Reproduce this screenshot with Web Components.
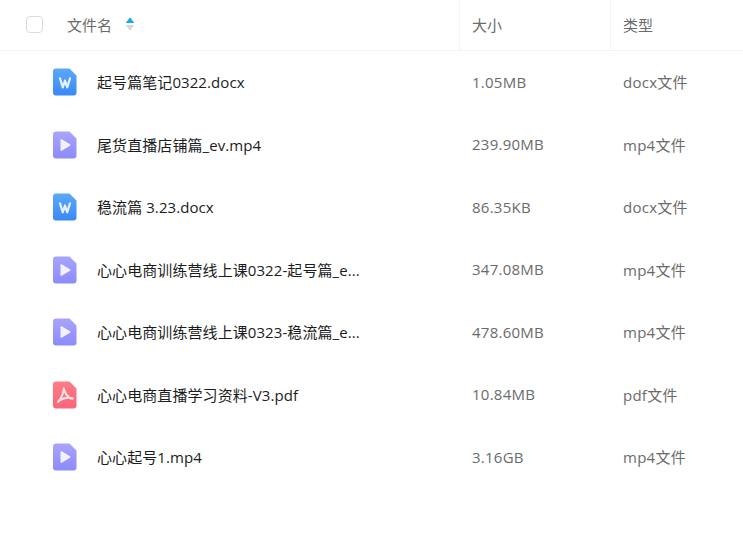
<!DOCTYPE html>
<html lang="zh">
<head>
<meta charset="utf-8">
<title>文件列表</title>
<style>
  html, body { margin: 0; background: #fff; }
  body { font-family: "Open Sans", "Noto Sans CJK SC", sans-serif; }
</style>
</head>
<body>
<file-table>
  <file-row kind="word" name="起号篇笔记0322.docx" size="1.05MB" type="docx文件"></file-row>
  <file-row kind="video" name="尾货直播店铺篇_ev.mp4" size="239.90MB" type="mp4文件"></file-row>
  <file-row kind="word" name="稳流篇 3.23.docx" size="86.35KB" type="docx文件"></file-row>
  <file-row kind="video" name="心心电商训练营线上课0322-起号篇_e..." size="347.08MB" type="mp4文件"></file-row>
  <file-row kind="video" name="心心电商训练营线上课0323-稳流篇_e..." size="478.60MB" type="mp4文件"></file-row>
  <file-row kind="pdf" name="心心电商直播学习资料-V3.pdf" size="10.84MB" type="pdf文件"></file-row>
  <file-row kind="video" name="心心起号1.mp4" size="3.16GB" type="mp4文件"></file-row>
</file-table>
<script>
const SHEET = 'M3 .5h13.500L23.500 7.500V24.500a3 3 0 0 1-3 3H3a3 3 0 0 1-3-3V3.500a3 3 0 0 1 3-3z';
const ICONS = {
  word: `<svg width="24" height="28" viewBox="0 0 24 28">
      <defs><linearGradient id="g" x1="0" y1="0" x2="0" y2="1"><stop offset="0" stop-color="#5aa9f8"/><stop offset="1" stop-color="#3a88f5"/></linearGradient></defs>
      <path d="${SHEET}" fill="url(#g)"/>
      <path d="M7 10.300l2.800 9 2.200-6.800 2.200 6.800 2.800-9" fill="none" stroke="#e6f1ff" stroke-width="2.200" stroke-linejoin="round" stroke-linecap="round"/>
    </svg>`,
  video: `<svg width="24" height="28" viewBox="0 0 24 28">
      <defs><linearGradient id="g" x1="0" y1="0" x2="0" y2="1"><stop offset="0" stop-color="#a9a4fb"/><stop offset="1" stop-color="#8b8bfb"/></linearGradient></defs>
      <path d="${SHEET}" fill="url(#g)"/>
      <path d="M7.500 9a.8.800 0 0 1 1.200-.7l8.300 5a.8.800 0 0 1 0 1.400l-8.300 5a.8.800 0 0 1-1.200-.7z" fill="#f3f1ff"/>
    </svg>`,
  pdf: `<svg width="24" height="28" viewBox="0 0 24 28">
      <defs><linearGradient id="g" x1="0" y1="0" x2="0" y2="1"><stop offset="0" stop-color="#fb7c88"/><stop offset="1" stop-color="#fb6577"/></linearGradient></defs>
      <path d="${SHEET}" fill="url(#g)"/>
      <path d="M10.800 7.500c-.3 4.500-2.300 9.500-5.800 13.500M10.800 7.500c.7 4.500 4 9.500 8.700 10.300M6.500 19.500c3.500-2.500 8-3.300 13-2.200" fill="none" stroke="#fde4e6" stroke-width="2" stroke-linecap="round"/>
    </svg>`
};

class FileTable extends HTMLElement {
  connectedCallback() {
    this.attachShadow({ mode: 'open' });
    this.shadowRoot.innerHTML = `
      <style>
        :host {
          display: block;
          color: #6b6b6b;
          font-size: 15px;
        }
        .head {
          display: grid;
          grid-template-columns: 459px 151px 1fr;
          height: 50px;
          border-bottom: 1px solid #f3f3f3;
        }
        .cell {
          display: flex;
          align-items: center;
          padding-left: 12px;
          border-left: 1px solid #f3f3f3;
          padding-bottom: 2px;
        }
        .cell.first {
          border-left: 0;
          padding-left: 26px;
        }
        .check {
          width: 15px;
          height: 15px;
          border: 1px solid #dcdcdc;
          border-radius: 4px;
          margin-right: 24px;
        }
        .sort {
          display: block;
          margin-left: 14px;
        }
      </style>
      <div class="head">
        <div class="cell first">
          <span class="check"></span>
          <span>文件名</span>
          <svg class="sort" width="8" height="14" viewBox="0 0 8 14">
            <path d="M4 1L7.500 5.500H.5z" fill="#1aa5f5" stroke="#1aa5f5" stroke-linejoin="round"/>
            <path d="M4 13L7.500 8.500H.5z" fill="#d4d7dc" stroke="#d4d7dc" stroke-linejoin="round"/>
          </svg>
        </div>
        <div class="cell">大小</div>
        <div class="cell">类型</div>
      </div>
      <slot></slot>
    `;
  }
}
customElements.define('file-table', FileTable);

class FileRow extends HTMLElement {
  connectedCallback() {
    this.attachShadow({ mode: 'open' });
    this.shadowRoot.innerHTML = `
      <style>
        :host {
          display: grid;
          grid-template-columns: 460px 151px 1fr;
          height: 62.5px;
          align-items: center;
          font-size: 15px;
          color: #6b6b6b;
        }
        .name {
          display: flex;
          align-items: center;
          gap: 20px;
          padding-left: 53px;
        }
        svg { display: block; flex: none; }
        .label {
          color: #1c1c1c;
          white-space: nowrap;
          padding-bottom: 1px;
          letter-spacing: .08px;
        }
        .val {
          padding: 0 0 1px 12px;
          letter-spacing: .25px;
        }
      </style>
      <div class="name">
        ${ICONS[this.getAttribute('kind')]}
        <span class="label">${this.getAttribute('name')}</span>
      </div>
      <div class="val">${this.getAttribute('size')}</div>
      <div class="val">${this.getAttribute('type')}</div>
    `;
  }
}
customElements.define('file-row', FileRow);
</script>
</body>
</html>
